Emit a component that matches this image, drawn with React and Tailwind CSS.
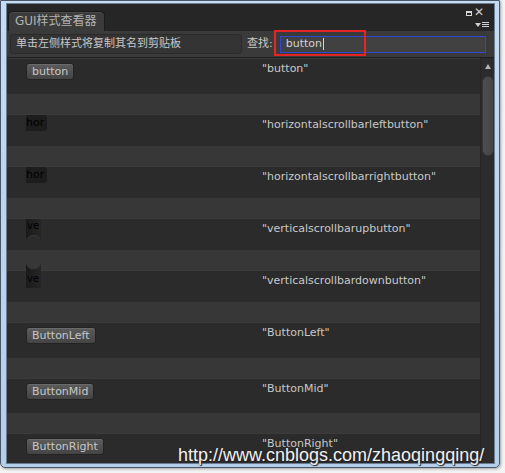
import React from "react";

const rows = [
  { kind: "btn", label: "button", h: "h-[36px]" },
  { kind: "hor", label: "horizontalscrollbarleftbutton", h: "h-[32px]" },
  { kind: "hor", label: "horizontalscrollbarrightbutton", h: "h-[32px]" },
  { kind: "veUp", label: "verticalscrollbarupbutton", h: "h-[32px]" },
  { kind: "veDown", label: "verticalscrollbardownbutton", h: "h-[32px]" },
  { kind: "btn", label: "ButtonLeft", h: "h-[36px]" },
  { kind: "btn", label: "ButtonMid", h: "h-[35px]" },
  { kind: "btn", label: "ButtonRight", h: "h-[36px]" },
];

const uiFont = { fontFamily: '"DejaVu Sans", Verdana, sans-serif' };

function Sample({ row }) {
  if (row.kind === "btn") {
    return (
      <div className="mt-[4px] h-[17px] px-[5px] rounded-[3px] border border-[#232323] bg-gradient-to-b from-[#5c5c5c] to-[#444444] text-[11px] leading-[15px] text-[#c6c6c6] shadow-[inset_0_1px_0_#6a6a6a]">
        {row.label}
      </div>
    );
  }
  if (row.kind === "hor") {
    return (
      <div className="h-[16px] w-[21px] overflow-hidden rounded-r-[3px] bg-[#1d1d1d] text-[11px] leading-[16px] text-black">
        hor
      </div>
    );
  }
  if (row.kind === "veUp") {
    return (
      <div className="relative h-[22px] w-[15px] overflow-hidden bg-gradient-to-r from-[#1a1a1a] to-[#262626] text-[10px] leading-[13px] text-black">
        <span className="pl-[1px]">ve</span>
        <div className="absolute left-0 bottom-[-6px] h-[12px] w-[15px] rounded-t-full border-t border-[#3a3a3a] bg-[#2b2b2b]" />
      </div>
    );
  }
  return (
    <div className="relative mt-[-7px] h-[24px] w-[15px] overflow-hidden bg-gradient-to-r from-[#1a1a1a] to-[#262626] text-[10px] leading-[13px] text-black">
      <div className="absolute left-0 top-[-6px] h-[12px] w-[15px] rounded-b-full border-b border-[#2a2a2a] bg-[#373737]" />
      <span className="absolute left-[1px] top-[8px]">ve</span>
    </div>
  );
}

export default function App() {
  return (
    <div className="relative h-[473px] w-[505px] overflow-hidden bg-[#f4f4f4]" style={uiFont}>
      {/* window frame */}
      <div className="h-[468px] w-[500px] rounded-b-[5px] border border-[#4a5666] bg-gradient-to-b from-[#c4dcf4] to-[#b4cfec] pl-[5px] pr-[4px] pt-[2px] pb-[3px] shadow-[1px_1px_3px_rgba(0,0,0,0.35)]">
        <div className="flex h-full flex-col border border-[#6c7c90] bg-[#282828]">
          {/* header with tab */}
          <div className="relative h-[27px] shrink-0 bg-[#262626]">
            <div
              className="absolute left-[1px] top-[7px] h-[20px] w-[97px] rounded-t-[5px] border border-b-0 border-[#1b1b1b] bg-[#3b3b3b] pl-[6px] text-[12px] leading-[19px] text-[#b2b2b2] shadow-[inset_0_1px_0_#4a4a4a]"
              style={{ fontFamily: '"DejaVu Sans", "Noto Sans CJK SC", sans-serif' }}
            >
              GUI样式查看器
            </div>
            <div className="absolute right-[22px] top-[7px] h-[5px] w-[6px] border border-[#d8d8d8] border-t-2" />
            <div className="absolute right-[10px] top-[1px] text-[12px] leading-[14px] text-[#cfcfcf]">✕</div>
            <div className="absolute right-[5px] top-[18px] flex items-center gap-[1px]">
              <div className="h-0 w-0 border-x-[3px] border-t-[4px] border-x-transparent border-t-[#d0d0d0]" />
              <div className="flex flex-col gap-[1px]">
                <div className="h-[1px] w-[7px] bg-[#d0d0d0]" />
                <div className="h-[1px] w-[7px] bg-[#d0d0d0]" />
                <div className="h-[1px] w-[7px] bg-[#d0d0d0]" />
              </div>
            </div>
          </div>

          {/* toolbar */}
          <div
            className="relative flex h-[26px] shrink-0 items-center bg-[#3a3a3a] pl-[3px]"
            style={{ fontFamily: '"DejaVu Sans", "Noto Sans CJK SC", sans-serif' }}
          >
            <div className="h-[20px] w-[232px] rounded-[3px] border border-[#2a2a2a] bg-[#343434] pl-[5px] text-[11px] leading-[18px] text-[#c8c8c8]">
              单击左侧样式将复制其名到剪贴板
            </div>
            <div className="ml-[5px] text-[11px] leading-[18px] text-[#c8c8c8]">查找:</div>
            <div className="ml-[7px] flex h-[17px] w-[206px] items-center border border-[#3346d0] bg-[#414141] pl-[5px] text-[11px] text-[#d2d2d2]" style={uiFont}>
              button
              <span className="ml-[1px] h-[12px] w-[1px] bg-[#d2d2d2]" />
            </div>
          </div>

          {/* list + scrollbar */}
          <div className="flex min-h-0 flex-1 border-t border-[#1e1e1e]">
            <div className="min-w-0 flex-1 overflow-hidden">
              {rows.map((row, i) => (
                <div key={i}>
                  <div className={`flex border-t border-[#3b3b3b] bg-[#2b2b2b] ${row.h}`}>
                    <div className="flex w-[255px] shrink-0 items-start pl-[19px]">
                      <Sample row={row} />
                    </div>
                    <div className="pt-[3px] text-[11px] leading-[13px] text-[#c8c8c8]">"{row.label}"</div>
                  </div>
                  <div className="h-[20px] bg-[#373737]" />
                </div>
              ))}
            </div>
            <div className="flex w-[14px] shrink-0 flex-col items-center border-l border-[#262626] bg-[#2c2c2c]">
              <div className="mt-[6px] h-0 w-0 border-x-[3px] border-b-[5px] border-x-transparent border-b-[#b4b4b4]" />
              <div className="mt-[7px] h-[80px] w-[12px] rounded-full border border-[#353535] bg-gradient-to-r from-[#4e4e4e] to-[#454545]" />
            </div>
          </div>
        </div>
      </div>

      {/* red highlight annotation */}
      <div className="absolute left-[274px] top-[30px] h-[26px] w-[92px] border-2 border-[#e52424]" />

      {/* watermark */}
      <div
        className="absolute left-[178px] top-[444px] text-[18px] leading-[22px] text-[#f0f0f0] [text-shadow:1px_1px_1px_#222,0_0_1px_#333]"
        style={{ fontFamily: '"Liberation Sans", Arial, sans-serif' }}
      >
        http://www.cnblogs.com/zhaoqingqing/
      </div>
    </div>
  );
}
